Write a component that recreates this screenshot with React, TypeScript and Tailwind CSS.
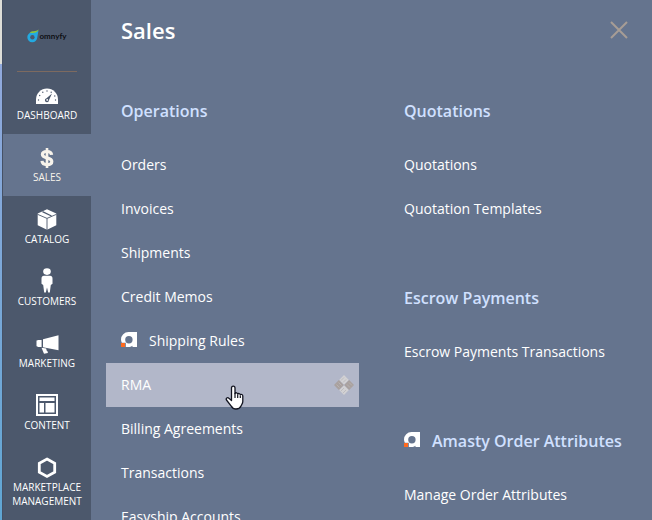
import React from 'react';
import clsx from 'clsx';

interface NavItem {
    label: string;
    icon: React.ReactNode;
    active?: boolean;
}

interface MenuLink {
    label: string;
    amasty?: boolean;
    hovered?: boolean;
}

interface MenuGroup {
    title: string;
    amasty?: boolean;
    links: MenuLink[];
}

const DashboardIcon = () => (
    <svg width="24" height="18" viewBox="0 0 24 18" aria-hidden="true">
        <path d="M1 17V12.500a11 11 0 0 1 22 0V17z" fill="#fff" />
        <g fill="#4c586c">
            <circle cx="3.500" cy="13" r="0.700" />
            <circle cx="4.700" cy="8.500" r="0.700" />
            <circle cx="7.800" cy="5.300" r="0.700" />
            <circle cx="12" cy="4" r="0.700" />
            <circle cx="16.200" cy="5.300" r="0.700" />
            <circle cx="19.800" cy="9" r="0.700" />
            <circle cx="20.500" cy="13" r="0.700" />
            <path d="M17 6.500 13.900 13.200a2 2 0 1 1-2.400-1.900z" />
        </g>
        <circle cx="12.200" cy="12.900" r="0.900" fill="#fff" />
    </svg>
);

const DollarIcon = () => (
    <svg width="14" height="20" viewBox="0 0 14 20" fill="none" stroke="#f7f3eb" aria-hidden="true">
        <path d="M7 0v20" strokeWidth="2.600" />
        <path d="M11.600 6.800C11.400 4.400 9.700 3.500 7 3.500S2.400 4.600 2.400 6.500c0 4.300 9.400 2.500 9.400 7 0 2-1.900 3.100-4.800 3.100s-4.800-1.200-5-3.700" strokeWidth="3.200" />
    </svg>
);

const CatalogIcon = () => (
    <svg width="20" height="22" viewBox="0 0 20 22" aria-hidden="true">
        <path d="M10 .3 19.300 4.500v11.800L10 20.700.7 16.300V4.500z" fill="#fff" />
        <path d="M.5 5.300 10 9.400l9.500-4.100M10 9.400V21" stroke="#4c586c" strokeWidth="0.900" fill="none" />
        <path d="M5.500 2.600 14.500 7" stroke="#4c586c" strokeWidth="1.200" />
    </svg>
);

const CustomersIcon = () => (
    <svg width="14" height="28" viewBox="0 0 14 28" fill="#fff" aria-hidden="true">
        <ellipse cx="7" cy="3.600" rx="3.800" ry="3.300" />
        <path d="M4 7.800h6c2 0 2.500 1.400 2.500 3v5l-1.700 1.200L9.800 24.500H8.200L7 19.500l-1.200 5H4.200l-1-7.500-1.700-1.200v-5c0-1.600.5-3 2.500-3z" />
    </svg>
);

const MarketingIcon = () => (
    <svg width="23" height="19" viewBox="0 0 23 19" fill="#fff" aria-hidden="true">
        <path d="M22.500.3v15L7 12.200V4.300zM.5 5.500h1V5H5.600v7H1.500v-.7h-1z" />
        <path d="m5.500 12.700 4.700.8.400 2 1.200 1.200v1.400l-3.800.7z" />
    </svg>
);

const ContentIcon = () => (
    <svg width="22" height="24" viewBox="0 0 22 24" fill="#fff" aria-hidden="true">
        <path fillRule="evenodd" d="M0 0h22v22H0zM2 2v18h18V2z" />
        <path d="M3.500 3.500h15V7h-15zM3.500 9H8v9.500H3.500zM9.500 9h9v9.500h-9z" />
    </svg>
);

const HexagonIcon = () => (
    <svg width="20" height="22" viewBox="0 0 20 22" aria-hidden="true">
        <path d="M10 2 17.700 6.300v8.800L10 19.400l-7.700-4.300V6.300z" fill="none" stroke="#fff" strokeWidth="2.800" />
    </svg>
);

const AmastyIcon = () => (
    <svg className="shrink-0" width="16" height="15" viewBox="0 0 16 15" aria-hidden="true">
        <path
            fillRule="evenodd"
            fill="#fff"
            d="M7.500 0H16v15h-4.500v-1.200C10.300 14.700 9 15 7.500 15H4.800v-4.300H.8C.3 9.500 0 8.500 0 7.500A7.500 7.500 0 0 1 7.500 0zM4.200 7.700a3.700 3.700 0 1 0 7.400 0a3.700 3.700 0 1 0-7.400 0z"
        />
        <path d="M0 11h4v4H0z" fill="#ff6a1f" />
    </svg>
);

const QuiltIcon = () => (
    <svg width="20" height="20" viewBox="0 0 20 20" aria-hidden="true">
        <path d="m10 0 4.900 4.900L10 9.800 5.100 4.900zM10 10.200l4.900 4.900L10 20l-4.900-4.900z" fill="#d2d1d3" />
        <path d="m4.900 5.100 4.900 4.900-4.900 4.900L0 10zM15.100 5.100 20 10l-4.900 4.900-4.900-4.900z" fill="#a9a19f" />
        <path d="m7 5.500 3-3M9 7.500l3-3M7 16l3-3M9 18l3-3" stroke="#bdbcc0" />
        <path d="m2.500 9.500 3 3M4.500 7.500l3 3M13 9.500l3 3M15 7.500l3 3" stroke="#b8b2b1" />
    </svg>
);

const HandCursor = () => (
    <svg className="absolute left-[119px] top-[22px]" width="19" height="26" viewBox="0 0 19 26" aria-hidden="true">
        <path
            d="M6.500 15.500V3c0-2.600 3.500-2.600 3.500 0v5.500c.5-1.200 2.700-.9 2.700.6.500-1 2.600-.7 2.600.7.700-.8 2.500-.4 2.500 1.200v5.500c0 2-1.300 3.200-1.800 4.500-.8 2-2.500 3-5 3-2.600 0-3.800-1.200-5-3.200L1.500 15c-1-1.900 1-3 2.400-1.700z"
            fill="#fff"
            stroke="#11131f"
            strokeWidth="1.300"
            strokeLinejoin="round"
        />
        <path d="M10 8v5M12.700 9.500V13M15.300 10.500V13" stroke="#11131f" strokeWidth="1.200" />
    </svg>
);

const OmnyfyLogo = () => (
    <span className="flex items-center">
        <svg width="12" height="14" viewBox="0 0 12 14" aria-hidden="true">
            <path d="M11.500 1.500C11 4 10.700 6 10.300 8.500a5 5 0 1 1-5-5.300C7.500 3.200 9.500 3 11.500 1.500z" fill="#23a9e0" />
            <path d="M2.500 3.500C5 1.800 8.500 2.800 11.800.6 10.500 3.800 7 4.800 2.500 3.500z" fill="#8cc63f" />
            <circle cx="5.400" cy="8.300" r="2.200" fill="#4c586c" />
        </svg>
        <span className="font-[Lato,sans-serif] text-[8px] leading-3 font-bold text-[#0c0e12]">omnyfy</span>
    </span>
);

const navItems: NavItem[] = [
    { label: 'Dashboard', icon: <DashboardIcon /> },
    { label: 'Sales', icon: <DollarIcon />, active: true },
    { label: 'Catalog', icon: <CatalogIcon /> },
    { label: 'Customers', icon: <CustomersIcon /> },
    { label: 'Marketing', icon: <MarketingIcon /> },
    { label: 'Content', icon: <ContentIcon /> },
    { label: 'Marketplace Management', icon: <HexagonIcon /> },
];

const columns: MenuGroup[][] = [
    [
        {
            title: 'Operations',
            links: [
                { label: 'Orders' },
                { label: 'Invoices' },
                { label: 'Shipments' },
                { label: 'Credit Memos' },
                { label: 'Shipping Rules', amasty: true },
                { label: 'RMA', hovered: true },
                { label: 'Billing Agreements' },
                { label: 'Transactions' },
                { label: 'Easyship Accounts' },
            ],
        },
    ],
    [
        { title: 'Quotations', links: [{ label: 'Quotations' }, { label: 'Quotation Templates' }] },
        { title: 'Escrow Payments', links: [{ label: 'Escrow Payments Transactions' }] },
        { title: 'Amasty Order Attributes', amasty: true, links: [{ label: 'Manage Order Attributes' }] },
    ],
];

const SidebarItem: React.FC<NavItem> = ({ label, icon, active }) => (
    <li>
        <a
            href="#"
            className={clsx(
                'flex min-h-[62px] flex-col items-center pt-3 text-center text-[10px] leading-[14px] font-medium uppercase',
                active ? 'bg-[#65748e] text-[#f7f3eb]' : 'text-white',
            )}
        >
            <span className="flex h-6 items-center justify-center">{icon}</span>
            <span>{label}</span>
        </a>
    </li>
);

const MenuRow: React.FC<MenuLink> = ({ label, amasty, hovered }) => (
    <li className="relative">
        <a
            href="#"
            className={clsx('flex h-11 items-center px-[15px] text-sm text-white', hovered && 'bg-[#b2b7c9]')}
        >
            {amasty && <span className="mr-3 pb-1"><AmastyIcon /></span>}
            <span>{label}</span>
            {hovered && <span className="-mr-[10px] ml-auto"><QuiltIcon /></span>}
        </a>
        {hovered && <HandCursor />}
    </li>
);

const MenuSection: React.FC<MenuGroup> = ({ title, amasty, links }) => (
    <section className="mb-14">
        <h3 className="mb-[21px] flex h-[22px] items-center px-[15px] text-base font-semibold whitespace-nowrap text-[#d0e0ff]">
            {amasty && <span className="mr-3 pb-1"><AmastyIcon /></span>}
            {title}
        </h3>
        <ul>
            {links.map((link) => (
                <MenuRow key={link.label} {...link} />
            ))}
        </ul>
    </section>
);

export default function App() {
    return (
        <div className="flex h-screen overflow-hidden bg-[#65748e] font-['Open_Sans','Noto_Sans',sans-serif]">
            <div className="flex w-[2px] shrink-0 flex-col">
                <div className="h-16 bg-[#deded8]" />
                <div className="flex-1 bg-linear-to-b from-[#91a9dc] to-[#5fa6d3]" />
            </div>
            <nav className="w-[89px] shrink-0 border-l border-[#465165] bg-[#4c586c]">
                <a href="#" aria-label="omnyfy" className="mx-[14px] flex h-[72px] items-center justify-center border-b border-[#7d6a60]">
                    <OmnyfyLogo />
                </a>
                <ul>
                    {navItems.map((item) => (
                        <SidebarItem key={item.label} {...item} />
                    ))}
                </ul>
            </nav>
            <main className="min-w-0 flex-1 pr-[10px] pl-[15px]">
                <header className="flex h-[60px] items-center justify-between pr-[14px] pl-[15px]">
                    <h2 className="text-[22px] leading-8 font-semibold text-white">Sales</h2>
                    <button type="button" aria-label="Close" className="text-[#a79d95]">
                        <svg width="18" height="18" viewBox="0 0 18 18" stroke="currentColor" strokeWidth="2">
                            <path d="m1 1 16 16M17 1 1 17" />
                        </svg>
                    </button>
                </header>
                <div className="grid grid-cols-2 gap-[30px] pt-10">
                    {columns.map((groups) => (
                        <div key={groups[0].title}>
                            {groups.map((group) => (
                                <MenuSection key={group.title} {...group} />
                            ))}
                        </div>
                    ))}
                </div>
            </main>
        </div>
    );
}
